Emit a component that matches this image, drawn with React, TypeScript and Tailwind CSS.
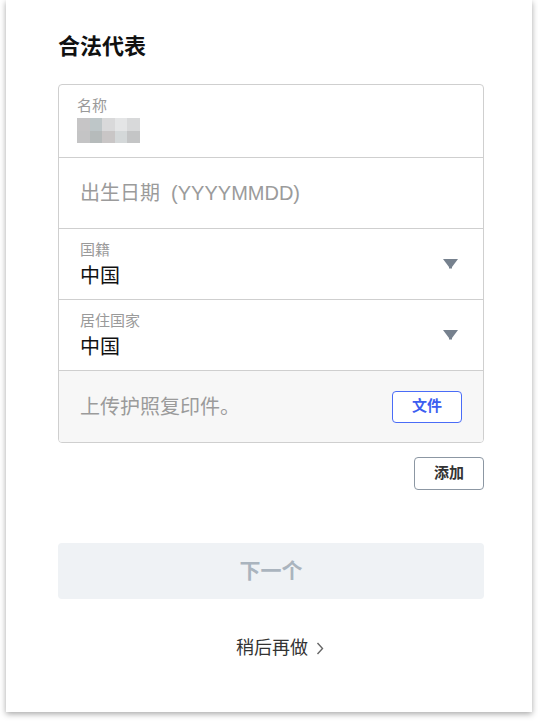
const font = { fontFamily: '"Liberation Sans", "Noto Sans CJK SC", sans-serif' };

const blur = [
  ["#c6c5c6", "#bec6c8", "#d9d9da", "#e4e5e6", "#d8d9da"],
  ["#c4c4c5", "#b6bbbb", "#c9c6c6", "#d4d8d9", "#c4c5c6"],
];

function Caret() {
  return (
    <svg width="15" height="10" viewBox="0 0 15 10" className="shrink-0">
      <path d="M0 0h15L9 8h-3z" fill="#76818e" />
      <rect x="6" y="6.5" width="3" height="3" fill="#76818e" />
    </svg>
  );
}

function SelectRow({ label, value }: { label: string; value: string }) {
  return (
    <div className="flex h-[71px] items-center justify-between border-t border-[#cfcfcf] pl-[21px] pr-[25px]">
      <div className="flex flex-col">
        <span className="text-[15px] leading-[20px] text-[#9a9a9a]">{label}</span>
        <span className="mt-[3px] text-[20px] leading-[26px] text-[#111]">{value}</span>
      </div>
      <Caret />
    </div>
  );
}

export default function App() {
  return (
    <div className="min-h-[723px] bg-white" style={font}>
      <div className="mx-[6px] h-[712px] bg-white shadow-[0_2px_6px_rgba(0,0,0,0.35)]">
        <div className="pl-[52px] pr-[48px] pt-[32px]">
          <h1 className="text-[22px] font-bold leading-[30px] text-[#111]">合法代表</h1>

          <div className="mt-[22px] overflow-hidden rounded-[4px] border border-[#cfcfcf]">
            <div className="flex h-[72px] flex-col pl-[18px] pt-[11px]">
              <span className="text-[15px] leading-[20px] text-[#9a9a9a]">名称</span>
              <div className="mt-[2px] flex flex-col">
                {blur.map((row, i) => (
                  <div key={i} className="flex">
                    {row.map((c, j) => (
                      <div key={j} className="h-[12.5px] w-[12.6px]" style={{ background: c }} />
                    ))}
                  </div>
                ))}
              </div>
            </div>
            <div className="flex h-[71px] items-center border-t border-[#cfcfcf] pl-[21px]">
              <span className="text-[20px] text-[#9b9b9b]">出生日期&nbsp; (YYYYMMDD)</span>
            </div>
            <SelectRow label="国籍" value="中国" />
            <SelectRow label="居住国家" value="中国" />
            <div className="flex h-[72px] items-center justify-between border-t border-[#cfcfcf] bg-[#f7f7f7] pl-[21px] pr-[21px]">
              <span className="text-[20px] text-[#9b9b9b]">上传护照复印件。</span>
              <button className="h-[32px] w-[70px] rounded-[4px] border border-[#4a6cf7] bg-white text-[15px] font-bold text-[#3c5ef0]">
                文件
              </button>
            </div>
          </div>

          <div className="mt-[14px] flex justify-end">
            <button className="h-[33px] w-[70px] rounded-[4px] border border-[#8c97a3] bg-white text-[15px] font-bold text-[#333]">
              添加
            </button>
          </div>

          <button className="mt-[53px] h-[56px] w-full rounded-[4px] bg-[#eff2f5] text-[21px] font-bold text-[#aab4be]">
            下一个
          </button>

          <div className="mt-[36px] flex items-center justify-center gap-[8px] pl-[18px] text-[18px] text-[#333]">
            <span>稍后再做</span>
            <svg width="8" height="13" viewBox="0 0 8 13">
              <path d="M1.5 1l5 5.5-5 5.5" fill="none" stroke="#666" strokeWidth="1.4" />
            </svg>
          </div>
        </div>
      </div>
    </div>
  );
}
